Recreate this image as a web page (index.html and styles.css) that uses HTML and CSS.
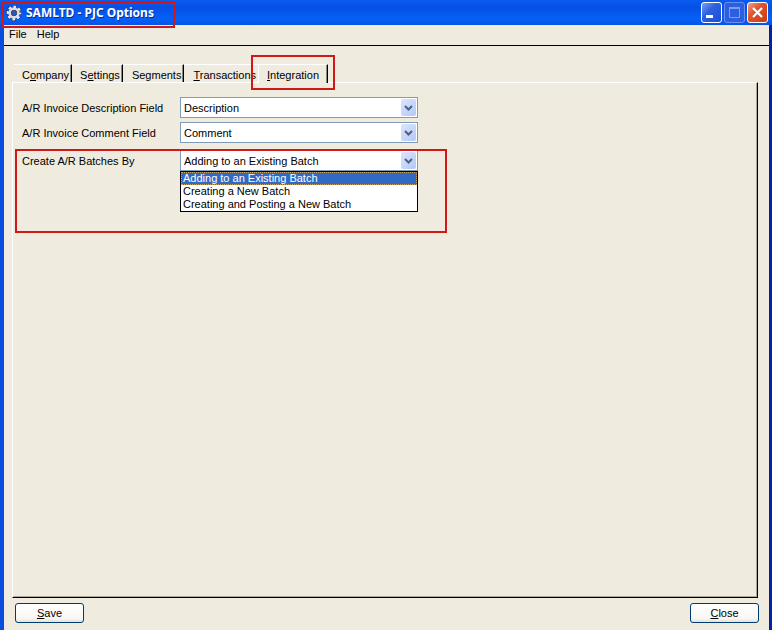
FILE: index.html
```html
<!DOCTYPE html>
<html lang="en">
<head>
  <meta charset="UTF-8">
  <meta name="viewport" content="width=device-width, initial-scale=1.0">
  <title>SAMLTD - PJC Options</title>
  <link rel="stylesheet" href="styles.css">
</head>
<body>
  <div class="window">
    <header class="titlebar">
      <svg class="gear" width="16" height="16" viewBox="0 0 16 16">
        <circle cx="8" cy="8" r="5.500" fill="#10204c"/>
        <circle cx="8" cy="8" r="6.400" fill="none" stroke="#10204c" stroke-width="3" stroke-dasharray="3.400 1.630" stroke-dashoffset="1.700"/>
        <circle cx="8" cy="8" r="6.200" fill="none" stroke="#e8e8ee" stroke-width="2.400" stroke-dasharray="2.800 2.070" stroke-dashoffset="1.400"/>
        <circle cx="8" cy="8" r="4.300" fill="none" stroke="#dcdce4" stroke-width="2.800"/>
        <circle cx="8" cy="8" r="2.600" fill="#2458c8" stroke="#4a4a5c"/>
      </svg>
      <h1 class="title">SAMLTD - PJC Options</h1>
      <div class="controls">
        <button class="control" aria-label="Minimize">
          <svg width="19" height="19" viewBox="0 0 19 19"><path d="M4 12h7v3H4z" fill="#fff"/></svg>
        </button>
        <button class="control control-off" aria-label="Maximize" disabled>
          <svg width="19" height="19" viewBox="0 0 19 19"><path d="M4.500 5v9.500h10V5M4 5.500h11" fill="none" stroke="#7f9df0"/><path d="M4 4h11v2H4z" fill="#7f9df0"/></svg>
        </button>
        <button class="control control-close" aria-label="Close window">
          <svg width="19" height="19" viewBox="0 0 19 19"><path d="M5 5l9 9M14 5l-9 9" stroke="#fff" stroke-width="2.200"/></svg>
        </button>
      </div>
      <span class="mark mark-title"></span>
    </header>

    <nav class="menubar">
      <button class="menu">File</button>
      <button class="menu">Help</button>
    </nav>

    <main class="content">
      <div class="tabs" role="tablist">
        <button class="tab" role="tab">C<u>o</u>mpany</button>
        <button class="tab" role="tab">S<u>e</u>ttings</button>
        <button class="tab tab-wide" role="tab">Se<u>g</u>ments</button>
        <button class="tab tab-wide tab-open" role="tab"><u>T</u>ransactions</button>
        <button class="tab tab-active" role="tab" aria-selected="true"><u>I</u>ntegration<span class="mark mark-tab"></span></button>
      </div>

      <section class="panel" role="tabpanel">
        <div class="row">
          <label class="label" for="description">A/R Invoice Description Field</label>
          <div class="combo">
            <select class="select" id="description"><option>Description</option></select>
            <span class="arrow"><svg width="9" height="6" viewBox="0 0 9 6"><path d="M1 1l3.500 3.500L8 1" fill="none" stroke="#4d6185" stroke-width="2"/></svg></span>
          </div>
        </div>
        <div class="row">
          <label class="label" for="comment">A/R Invoice Comment Field</label>
          <div class="combo">
            <select class="select" id="comment"><option>Comment</option></select>
            <span class="arrow"><svg width="9" height="6" viewBox="0 0 9 6"><path d="M1 1l3.500 3.500L8 1" fill="none" stroke="#4d6185" stroke-width="2"/></svg></span>
          </div>
        </div>
        <div class="row row-batch">
          <label class="label" for="batch">Create A/R Batches By</label>
          <div class="combo">
            <select class="select" id="batch">
              <option>Adding to an Existing Batch</option>
              <option>Creating a New Batch</option>
              <option>Creating and Posting a New Batch</option>
            </select>
            <span class="arrow"><svg width="9" height="6" viewBox="0 0 9 6"><path d="M1 1l3.500 3.500L8 1" fill="none" stroke="#4d6185" stroke-width="2"/></svg></span>
            <ul class="list" role="listbox" aria-label="Create A/R Batches By">
              <li class="item item-selected" role="option" aria-selected="true">Adding to an Existing Batch</li>
              <li class="item" role="option">Creating a New Batch</li>
              <li class="item" role="option">Creating and Posting a New Batch</li>
            </ul>
          </div>
          <span class="mark mark-batch"></span>
        </div>
      </section>
    </main>

    <footer class="footer">
      <button class="button"><u>S</u>ave</button>
      <button class="button"><u>C</u>lose</button>
    </footer>
  </div>
</body>
</html>
```

FILE: styles.css
```css
* {
  box-sizing: border-box;
}
body {
  margin: 0;
  font-family: "Liberation Sans", Arial, sans-serif;
  font-size: 11px;
  line-height: 13px;
  color: #000;
  background: #efebde;
}
button, select {
  font: inherit;
  color: inherit;
}
.window {
  display: flex;
  flex-direction: column;
  min-height: 100vh;
  border-left: 4px solid #0a4be0;
  border-right: 3px solid #0420a8;
}

/* title bar */
.titlebar {
  position: relative;
  display: flex;
  align-items: center;
  height: 25px;
  margin: 0 -3px 0 -4px;
  padding: 0 4px 0 6px;
  background: linear-gradient(#0a5cf0, #0550e4 30%, #0560f8 75%, #0354e6);
}
.gear {
  margin-right: 4px;
}
.title {
  flex: 1;
  margin: 0;
  font-family: "Noto Sans", "Open Sans", sans-serif;
  font-size: 12px;
  line-height: 16px;
  font-weight: bold;
  color: #fff;
  text-shadow: 1px 1px #0a2c8c;
}
.controls {
  display: flex;
  gap: 2px;
}
.control {
  width: 21px;
  height: 21px;
  padding: 0;
  border: 1px solid #fff;
  border-radius: 3px;
  background: linear-gradient(135deg, #7ba0f4, #2c62e0 40%, #1c4cd4);
}
.control svg {
  display: block;
}
.control-off {
  border-color: #6a8ff0;
  background: #2c5ee0;
}
.control-close {
  background: linear-gradient(135deg, #f0a088, #e0532c 40%, #cc3c10);
}

/* menu */
.menubar {
  display: flex;
  height: 21px;
  padding: 0 1px;
  border-bottom: 1px solid #000;
}
.menu {
  height: 18px;
  margin-right: 2px;
  padding: 0 4px;
  border: 0;
  background: none;
}

/* tabs */
.content {
  flex: 1;
  display: flex;
  flex-direction: column;
  padding: 18px 11px 0 8px;
}
.tabs {
  display: flex;
  padding-left: 2px;
}
.tab {
  position: relative;
  height: 18px;
  padding: 3px 2px 0 8px;
  border: 0;
  border-top: 1px solid #fff;
  border-right: 1px solid #000;
  box-shadow: inset -1px 0 #8c887c;
  background: none;
  white-space: nowrap;
}
.tab-wide {
  padding-left: 9px;
}
.tab-open {
  border-right: 0;
  box-shadow: none;
}
.tab-active {
  height: 19px;
  margin-bottom: -1px;
  padding: 2px 8px 0;
  border-left: 1px solid #fff;
  background: #efebde;
}
.panel {
  flex: 1;
  padding: 14px 9px;
  border: 1px solid #fff;
  border-right-color: #000;
  border-bottom-color: #000;
  box-shadow: inset -1px -1px #aca899;
}

/* fields */
.row {
  position: relative;
  display: grid;
  grid-template-columns: 158px minmax(0, 238px);
  align-items: center;
  margin-bottom: 4px;
}
.row-batch {
  margin-top: 7px;
}
.label {
  padding-top: 1px;
}
.combo {
  position: relative;
}
.select {
  display: block;
  appearance: none;
  width: 100%;
  height: 21px;
  padding: 1px 20px 0 3px;
  border: 1px solid #7f9db9;
  border-radius: 0;
  background: #fff;
}
.arrow {
  position: absolute;
  top: 2px;
  right: 2px;
  display: flex;
  align-items: center;
  justify-content: center;
  width: 15px;
  height: 17px;
  border-radius: 2px;
  background: linear-gradient(135deg, #dbe5fe, #b4c8f6);
  pointer-events: none;
}
.list {
  position: absolute;
  top: 100%;
  left: 0;
  right: 0;
  margin: 0;
  padding: 0;
  border: 1px solid #000;
  background: #fff;
  list-style: none;
}
.item {
  padding-left: 2px;
}
.item-selected {
  color: #fff;
  background: #316ac5;
  outline: 1px dotted #c8a060;
  outline-offset: -1px;
}

/* red highlight frames */
.mark {
  position: absolute;
  border: 2px solid #d01818;
  pointer-events: none;
}
.mark-title {
  top: 1px;
  left: 2px;
  width: 173px;
  height: 27px;
}
.mark-tab {
  top: -10px;
  left: -8px;
  right: -8px;
  bottom: -7px;
}
.mark-batch {
  top: -1px;
  left: -7px;
  width: 432px;
  height: 84px;
}

/* bottom buttons */
.footer {
  display: flex;
  justify-content: space-between;
  padding: 5px 10px 7px 11px;
}
.button {
  width: 69px;
  height: 20px;
  padding: 0;
  border: 1px solid #003c74;
  border-radius: 3px;
  background: linear-gradient(#fff, #f8f7f3 80%, #e6e2d8);
}
```
